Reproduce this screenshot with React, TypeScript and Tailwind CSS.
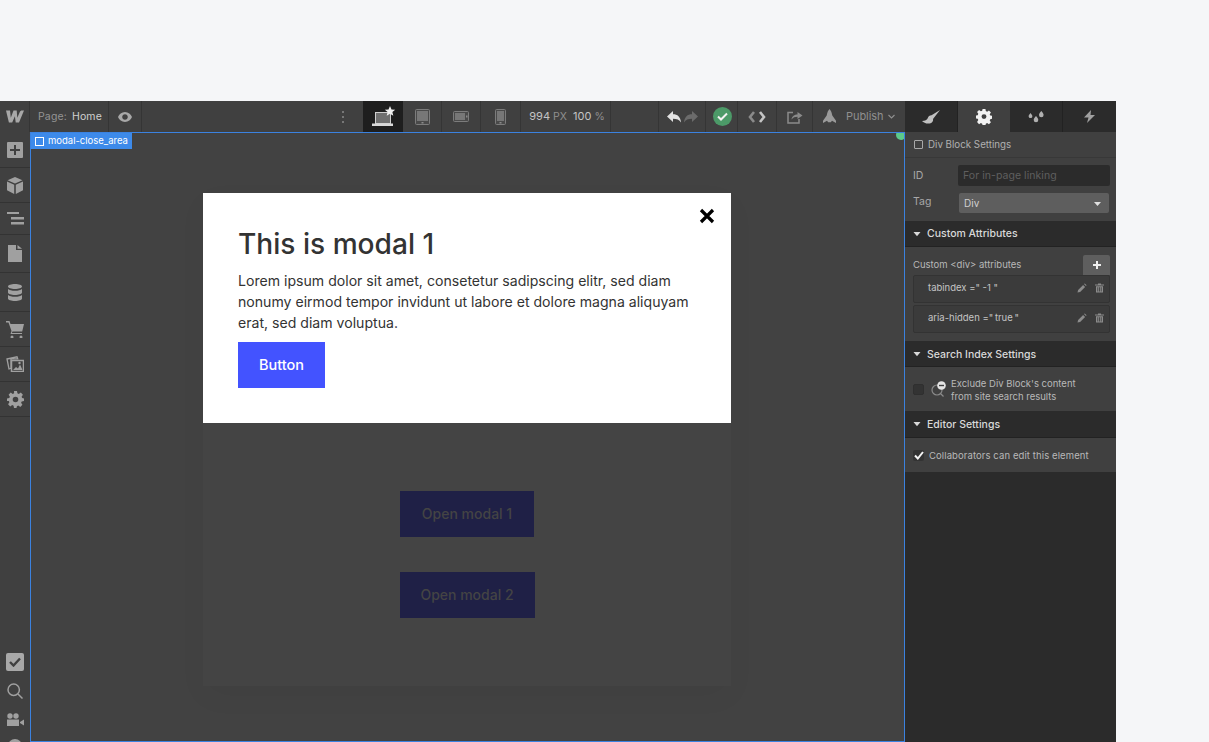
import type { ReactNode } from 'react';

const UI = "font-['Inter',sans-serif]";

const Ico = ({ w = 16, h = 16, vb, children }: { w?: number; h?: number; vb?: string; children: ReactNode }) => (
  <svg width={w} height={h} viewBox={vb ?? `0 0 ${w} ${h}`} fill="currentColor" className="block shrink-0">
    {children}
  </svg>
);

const SideItem = ({ h, children }: { h: string; children: ReactNode }) => (
  <div className={`${h} flex items-center justify-center border-b border-[#333] text-[#a0a0a0]`}>{children}</div>
);

const SectionHeader = ({ title, h, low }: { title: string; h: string; low?: boolean }) => (
  <div className={`${h} flex items-center gap-[6px] bg-[#2b2b2b] border-b border-[#222] pl-[8px] shrink-0`}>
    <Ico w={8} h={6}><path d="M0.5 1h7L4 5.2z" fill="#d9d9d9" /></Ico>
    <span className={`text-[10.5px] font-medium text-[#d9d9d9] ${low ? 'pt-[2px]' : 'pt-[1px]'}`}>{title}</span>
  </div>
);

const AttrRow = ({ label, h }: { label: string; h: string }) => (
  <div className={`${h} flex items-center justify-between bg-[#3b3b3b] border border-[#333] rounded-[2px] pl-[14px] pr-[5px]`}>
    <span className="text-[9.5px] text-[#c4c4c4] pb-[1px]">{label}</span>
    <div className="flex items-center gap-[8px] text-[#8c8c8c] -mt-[3px]">
      <Ico w={10} h={10}><path d="M0.5 9.5l.6-2.600 5-5 2 2-5 5zM7 1l.8-.6 1.800 1.800-.7.8z" /></Ico>
      <Ico w={9} h={10}><path d="M3 .5h3v1h3v1H0v-1h3zM1 3.200h7V9.500H1zM2.400 4.200v4.300h.8V4.200zm1.700 0v4.300h.8V4.200zm1.700 0v4.300h.8V4.200z" fillRule="evenodd" /></Ico>
    </div>
  </div>
);

const TopSep = ({ className, children }: { className: string; children?: ReactNode }) => (
  <div className={`${className} h-full flex items-center justify-center border-r border-[#353535] shrink-0`}>{children}</div>
);

const TabletIcon = ({ w, h }: { w: number; h: number }) => (
  <svg width={w} height={h} viewBox={`0 0 ${w} ${h}`} className="block">
    <rect x="0.5" y="0.5" width={w - 1} height={h - 1} rx="1" fill="#4a4a4a" stroke="#7c7c7c" />
    <rect x="2" y="2" width={w - 4} height={h - 6} fill="#777" />
    <rect x={w / 2 - 1} y={h - 3} width="2" height="1.500" fill="#8a8a8a" />
  </svg>
);

const LandscapeIcon = () => (
  <svg width="16" height="11" viewBox="0 0 16 11" className="block">
    <rect x="0.5" y="0.5" width="15" height="10" rx="1" fill="#4a4a4a" stroke="#7c7c7c" />
    <rect x="2" y="2" width="10" height="7" fill="#777" />
    <rect x="13" y="4.500" width="1.500" height="2" fill="#8a8a8a" />
  </svg>
);

export default function App() {
  return (
    <div className={`${UI} w-[1209px] h-[742px] bg-[#f5f6f8] pt-[101px] overflow-hidden`}>
      <div className="w-[1116px] h-[641px] flex overflow-hidden">
        <div className="w-[905px] flex flex-col shrink-0">
          {/* Top bar */}
          <div className="h-[31px] flex bg-[#404040] shrink-0 text-[#a8a8a8]">
            <TopSep className="w-[30px]">
              <svg width="18" height="13" viewBox="0 0 18 13" className="block">
                <path d="M0 .5h4l.8 7.300L7.500.5h3.200l.6 7.300L13.800 2c.5-1 1.200-1.500 2.200-1.500h2L13 12.500H9.700l-.8-6.200-2.700 6.200H2.900z" fill="#a8a8a8" />
              </svg>
            </TopSep>
            <TopSep className="w-[79px]">
              <span className="text-[10.5px] whitespace-nowrap pl-[2px] tracking-[0.15px]">
                <span className="text-[#949494]">Page:</span>
                <span className="text-[#d0d0d0] ml-[5px]">Home</span>
              </span>
            </TopSep>
            <TopSep className="w-[33px]">
              <Ico w={14} h={10}>
                <path d="M7 0C3.600 0 1.200 2.400 0 5c1.200 2.600 3.600 5 7 5s5.800-2.400 7-5c-1.200-2.600-3.600-5-7-5zm0 2.200c1.600 0 2.800 1.200 2.800 2.800S8.600 7.800 7 7.800 4.200 6.600 4.200 5 5.400 2.200 7 2.200z" fillRule="evenodd" />
              </Ico>
            </TopSep>
            <div className="w-[221px] h-[31px] flex items-center justify-end pr-[19px] shrink-0">
              <div className="flex flex-col gap-[3px]">
                <span className="w-[2px] h-[2px] bg-[#777]" />
                <span className="w-[2px] h-[2px] bg-[#777]" />
                <span className="w-[2px] h-[2px] bg-[#777]" />
              </div>
            </div>
            <div className="w-[40px] h-full bg-[#1e1e1e] flex items-center justify-center shrink-0">
              <svg width="24" height="20" viewBox="0 0 24 20" className="block -mt-[2px] ml-[1px]">
                <rect x="3.500" y="6.500" width="15" height="11" fill="#6f6f6f" stroke="#cfcfcf" />
                <rect x="0" y="17.500" width="21" height="2.500" fill="#d8d8d8" />
                <path d="M18 0l1.500 3.400 3.700.3-2.800 2.400.9 3.600L18 7.800l-3.300 1.900.9-3.600-2.800-2.400 3.700-.3z" fill="#f0f0f0" />
              </svg>
            </div>
            <TopSep className="w-[39px]"><TabletIcon w={15} h={16} /></TopSep>
            <TopSep className="w-[39px]"><LandscapeIcon /></TopSep>
            <TopSep className="w-[40px]"><TabletIcon w={11} h={16} /></TopSep>
            <TopSep className="w-[90px]">
              <span className="text-[11px] whitespace-nowrap text-[#c4c4c4] pl-[3px]">
                994 <span className="text-[#8f8f8f] text-[10.5px]">PX</span>
                <span className="ml-[6px]">100</span> <span className="text-[#8f8f8f] text-[10.5px]">%</span>
              </span>
            </TopSep>
            <div className="w-[48px] h-full border-r border-[#353535] shrink-0" />
            <TopSep className="w-[47px]">
              <div className="flex items-center gap-[3px]">
                <Ico w={14} h={12}><path d="M6 0v3.200c4.500 0 7.500 2.500 8 8.300-1.600-2.900-4.300-3.700-8-3.700V11L0 5.500z" fill="#e2e2e2" /></Ico>
                <Ico w={14} h={12}><path d="M8 0v3.200C3.500 3.200.5 5.700 0 11.500c1.600-2.900 4.300-3.700 8-3.700V11l6-5.500z" fill="#6b6b6b" /></Ico>
              </div>
            </TopSep>
            <TopSep className="w-[32px]">
              <div className="w-[19px] h-[19px] ml-[1px] rounded-full bg-[#4c9a68] flex items-center justify-center">
                <Ico w={11} h={9}><path d="M1 4.500l3 3 6-6" fill="none" stroke="#f2f2f2" strokeWidth="2" /></Ico>
              </div>
            </TopSep>
            <TopSep className="w-[39px]">
              <svg width="18" height="12" viewBox="0 0 18 12" className="block" fill="none" strokeWidth="2.600">
                <path d="M6 1L2 6l4 5" stroke="#8a8a8a" />
                <path d="M12 1l4 5-4 5" stroke="#c4c4c4" />
              </svg>
            </TopSep>
            <TopSep className="w-[36px]">
              <svg width="16" height="14" viewBox="0 0 16 14" className="block" fill="none">
                <path d="M6 2.500H1v10.500h11V9" stroke="#8a8a8a" strokeWidth="1.500" />
                <path d="M4.500 9.500C5 6 7.500 4.500 10.500 4.500V2L15.500 5.500 10.500 9V6.800C8 6.800 6 7.500 4.500 9.500z" fill="#8a8a8a" />
              </svg>
            </TopSep>
            <div className="flex-1 flex items-center pl-[9px] gap-[9px]">
              <Ico w={15} h={15}>
                <path d="M7.500 0c1.300 1.300 2.300 3.500 2.800 6.500l3.700 5.300V14l-4-2.200-1.200 1.400H6.200L5 11.800 1 14v-2.200l3.700-5.300C5.200 3.500 6.200 1.300 7.500 0z" fill="#9a9a9a" />
              </Ico>
              <span className="text-[11px] text-[#8f8f8f] tracking-[-0.05px]">Publish</span>
              <div className="-ml-[5px]">
                <Ico w={7} h={5}><path d="M.5 1l3 3 3-3" fill="none" stroke="#8f8f8f" strokeWidth="1.100" /></Ico>
              </div>
            </div>
          </div>

          <div className="flex-1 flex min-h-0">
            {/* Left toolbar */}
            <div className="w-[30px] bg-[#404040] flex flex-col justify-between shrink-0 overflow-hidden">
              <div>
                <SideItem h="h-[36px]">
                  <div className="w-[16px] h-[16px] bg-[#a0a0a0] rounded-[1px] flex items-center justify-center">
                    <Ico w={10} h={10}><path d="M4 0h2v4h4v2H6v4H4V6H0V4h4z" fill="#404040" /></Ico>
                  </div>
                </SideItem>
                <SideItem h="h-[35px]">
                  <Ico w={16} h={17}>
                    <path d="M8 0l7.500 3.200L8 6.500.5 3.200zM0 4.500l7.200 3.200V17L0 13.300zM16 4.500L8.800 7.700V17l7.200-3.700z" />
                  </Ico>
                </SideItem>
                <SideItem h="h-[32px]">
                  <Ico w={17} h={13}><path d="M0 0h12v2H0zM4 5h13v2.500H4zM4 10h13v2.500H4z" /></Ico>
                </SideItem>
                <SideItem h="h-[38px]">
                  <Ico w={14} h={17}><path d="M0 0h8v5h6v12H0zM9.500 0L14 3.800H9.500z" /></Ico>
                </SideItem>
                <SideItem h="h-[39px]">
                  <Ico w={14} h={17}>
                    <path d="M7 0c3.900 0 7 1 7 2.500S10.900 5 7 5 0 4 0 2.500 3.100 0 7 0zM0 5c1.200 1.200 3.800 1.800 7 1.800S12.800 6.200 14 5v3.500C14 10 10.900 11 7 11S0 10 0 8.500zM0 11c1.200 1.200 3.800 1.800 7 1.800s5.800-.6 7-1.800v3.500C14 16 10.900 17 7 17s-7-1-7-2.500z" />
                  </Ico>
                </SideItem>
                <SideItem h="h-[35px]">
                  <Ico w={18} h={17}>
                    <path d="M0 0h3.500l1 3H18l-1.800 7.500H6.500L5.800 12H16v1H4.500l1-3L2.500 1.500H0z" />
                    <circle cx="6" cy="16" r="1.500" /><circle cx="15" cy="16" r="1.500" />
                  </Ico>
                </SideItem>
                <SideItem h="h-[35px]">
                  <svg width="18" height="16" viewBox="0 0 18 16" className="block">
                    <path d="M1 3L11 .8l.7 2H5v9.500L3 13z" fill="none" stroke="#a0a0a0" strokeWidth="1.300" />
                    <rect x="5.500" y="4.500" width="12" height="11" fill="none" stroke="#a0a0a0" strokeWidth="1.500" />
                    <path d="M7 14l3-3 2 1.500 2-4 2.500 5.500z" fill="#a0a0a0" />
                    <circle cx="13.500" cy="7" r="1.200" fill="#a0a0a0" />
                  </svg>
                </SideItem>
                <SideItem h="h-[35px]">
                  <Ico w={17} h={17}>
                    <path d="M7 0h3l.4 2.300 1.400.6 2-1.300 2.100 2.100-1.300 2 .6 1.400L17 7.500v2.500l-2.300.4-.6 1.400 1.300 2-2.100 2.100-2-1.300-1.400.6L9.500 17H7l-.4-2.300-1.400-.6-2 1.300-2.100-2.100 1.300-2-.6-1.400L0 10V7.500l2.300-.4.6-1.400-1.300-2 2.100-2.100 2 1.300 1.400-.6zM8.500 5.700a2.800 2.800 0 100 5.600 2.800 2.800 0 000-5.600z" fillRule="evenodd" />
                  </Ico>
                </SideItem>
              </div>
              <div className="flex flex-col items-center text-[#a0a0a0] h-[89px] shrink-0">
                <div className="w-[18px] h-[18px] bg-[#a8a8a8] rounded-[2px] flex items-center justify-center shrink-0">
                  <Ico w={12} h={10}><path d="M1 5l3.500 3.500L11 1.500" fill="none" stroke="#404040" strokeWidth="2.400" /></Ico>
                </div>
                <svg width="16" height="16" viewBox="0 0 16 16" className="block mt-[12px] shrink-0" fill="none" stroke="#a0a0a0" strokeWidth="1.500">
                  <circle cx="6.700" cy="6.700" r="5.700" /><path d="M11 11l4.500 4.500" />
                </svg>
                <div className="mt-[14px] shrink-0">
                  <Ico w={18} h={14}>
                    <circle cx="4" cy="3" r="2.700" /><circle cx="10" cy="3" r="2.700" />
                    <path d="M1 6.500h12V13H1zM14 9l4-2.500v6L14 10z" />
                  </Ico>
                </div>
                <span className="mt-[12px] w-[14px] h-[14px] rounded-full bg-[#a0a0a0] shrink-0" />
              </div>
            </div>

            {/* Canvas */}
            <div className="flex-1 bg-[#424242] border border-[#3b82e0] relative overflow-hidden pl-[172px] pt-[60px]">
              <div className="absolute left-0 top-0 h-[16px] w-[101px] bg-[#3d8aea] flex items-center pl-[4px] gap-[4px] text-white">
                <span className="w-[9px] h-[9px] border border-white shrink-0" />
                <span className="text-[9.5px] whitespace-nowrap">modal-close_area</span>
              </div>
              <div className="absolute -right-[2px] -top-[3px] w-[10px] h-[10px] rounded-full bg-[#5cc98a]" />

              <div className="w-[528px] h-[493px] bg-[#444444] shadow-[0_10px_30px_rgba(0,0,0,0.03)] flex flex-col items-center">
                <div className="w-full h-[230px] bg-white relative pt-[34px] px-[35px] shrink-0">
                  <svg width="16" height="16" viewBox="0 0 16 16" className="absolute right-[16px] top-[15px]">
                    <path d="M2 2l12 12M14 2L2 14" stroke="#000" strokeWidth="3.200" />
                  </svg>
                  <h2 className="text-[28.1px] leading-[34px] font-medium text-[#333]">This is modal 1</h2>
                  <p className="text-[14.1px] leading-[21px] text-[#333] mt-[9px]">
                    Lorem ipsum dolor sit amet, consetetur sadipscing elitr, sed diam nonumy eirmod tempor invidunt ut labore et dolore magna aliquyam erat, sed diam voluptua.
                  </p>
                  <div className="mt-[9px] w-[87px] h-[46px] bg-[#4353ff] text-white text-[14.5px] font-medium flex items-center justify-center">Button</div>
                </div>
                <div className="mt-[68px] w-[134px] h-[46px] pb-[1px] bg-[#1f2046] text-[#444] text-[14px] font-medium flex items-center justify-center">Open modal 1</div>
                <div className="mt-[35px] w-[135px] h-[46px] pb-[1px] bg-[#1f2046] text-[#444] text-[14px] font-medium flex items-center justify-center">Open modal 2</div>
              </div>
            </div>
          </div>
        </div>

        {/* Right panel */}
        <div className="w-[211px] bg-[#2b2b2b] flex flex-col shrink-0">
          <div className="h-[31px] flex shrink-0 text-[#b8b8b8]">
            <div className="w-[53px] flex items-center justify-center border-r border-[#222]">
              <Ico w={18} h={14}>
                <path d="M18 0L9.500 5.200C7.500 5.200 6.300 6.400 5.700 8.300 5.200 10 3 10.800 0 11c2 2.200 6 3.500 9.200 1.900 1.600-.8 2.200-2.500 1.800-4z" fill="#c0c0c0" />
              </Ico>
            </div>
            <div className="w-[52px] bg-[#404040] flex items-center justify-center">
              <Ico w={16} h={16}>
                <path d="M6.500 0h3l.4 2.200 1.400.6 1.900-1.300 2.100 2.100-1.300 1.900.6 1.400 2.200.4v3l-2.200.4-.6 1.400 1.300 1.900-2.100 2.100-1.900-1.300-1.400.6-.4 2.200h-3l-.4-2.200-1.400-.6-1.900 1.300L.7 13.600 2 11.700l-.6-1.400L-.8 9.900v-3l2.200-.4.6-1.400L.7 3.200l2.100-2.100 1.900 1.300 1.400-.6zM8 5.400a2.600 2.600 0 100 5.200 2.600 2.600 0 000-5.200z" fill="#f2f2f2" fillRule="evenodd" transform="translate(0.4 0) scale(0.95)" />
              </Ico>
            </div>
            <div className="w-[53px] flex items-center justify-center border-r border-[#222]">
              <Ico w={16} h={12}>
                <path d="M2.500 2c1 1.300 1.900 2.200 1.900 3.200a1.900 1.900 0 01-3.800 0c0-1 .9-1.900 1.900-3.200zM8 5c1.200 1.600 2.300 2.500 2.300 4a2.300 2.300 0 01-4.600 0c0-1.500 1.100-2.400 2.300-4zM13.300 0c1.200 1.600 2.300 2.500 2.300 4a2.300 2.300 0 01-4.600 0c0-1.500 1.100-2.400 2.300-4z" fill="#b0b0b0" />
              </Ico>
            </div>
            <div className="w-[53px] flex items-center justify-center">
              <Ico w={11} h={13}><path d="M7 0L0 7.500h4.500L3 13l8-8H6.500z" fill="#a0a0a0" /></Ico>
            </div>
          </div>

          <div className="bg-[#404040] shrink-0">
            <div className="h-[26px] flex items-center pl-[9px] gap-[5px] border-b border-[#383838]">
              <span className="w-[9px] h-[9px] border border-[#a8a8a8] rounded-[1px]" />
              <span className="text-[9.75px] text-[#b0b0b0] pt-[1px]">Div Block Settings</span>
            </div>
            <div className="h-[63px] pl-[8px] pr-[6px] pt-[7px] flex flex-col gap-[7px]">
              <div className="flex items-center h-[21px]">
                <span className="w-[45px] text-[10.5px] text-[#a8a8a8]">ID</span>
                <div className="flex-1 h-[21px] bg-[#2b2b2b] rounded-[2px] flex items-center pl-[5px] text-[10.5px] text-[#5f5f5f] tracking-[0.05px]">For in-page linking</div>
              </div>
              <div className="flex items-center h-[20px]">
                <span className="w-[46px] text-[10.5px] text-[#a8a8a8] -mt-[2px]">Tag</span>
                <div className="flex-1 h-[20px] mr-[1px] bg-[#5e5e5e] rounded-[2px] flex items-center justify-between pl-[5px] pr-[8px] pt-[1px] text-[10px] text-[#d0d0d0]">
                  Div
                  <Ico w={7} h={4}><path d="M0 0h7L3.500 4z" fill="#e0e0e0" /></Ico>
                </div>
              </div>
            </div>
          </div>

          <SectionHeader title="Custom Attributes" h="h-[26px]" />
          <div className="h-[94px] bg-[#404040] pl-[8px] pr-[6px] pt-[8px] shrink-0">
            <div className="flex items-center justify-between h-[20px]">
              <span className="text-[9.5px] text-[#b8b8b8]">Custom &lt;div&gt; attributes</span>
              <div className="w-[27px] h-[20px] bg-[#5e5e5e] rounded-t-[2px] flex items-center justify-center">
                <Ico w={8} h={8}><path d="M3 0h2v3h3v2H5v3H3V5H0V3h3z" fill="#eee" /></Ico>
              </div>
            </div>
            <div className="flex flex-col gap-[2px]">
              <AttrRow label={'tabindex =" -1 "'} h="h-[28px]" />
              <AttrRow label={'aria-hidden ="\u2009true\u2009"'} h="h-[28px]" />
            </div>
          </div>

          <SectionHeader title="Search Index Settings" h="h-[26px]" low />
          <div className="h-[44px] bg-[#404040] flex items-center pl-[8px] shrink-0">
            <span className="w-[11px] h-[11px] bg-[#333] border border-[#2f2f2f] rounded-[2px] shrink-0" />
            <svg width="16" height="16" viewBox="0 0 16 16" className="block ml-[7px] shrink-0">
              <circle cx="6" cy="9" r="5" fill="none" stroke="#8a8a8a" strokeWidth="1.200" />
              <path d="M9.500 12.500l3 3" stroke="#8a8a8a" strokeWidth="1.200" />
              <circle cx="10.500" cy="4.500" r="4.300" fill="#e4e4e4" />
              <rect x="8" y="3.800" width="5" height="1.400" fill="#404040" />
            </svg>
            <span className="ml-[4px] mt-[3px] text-[9.5px] leading-[12.5px] text-[#b8b8b8]">Exclude Div Block's content<br />from site search results</span>
          </div>

          <SectionHeader title="Editor Settings" h="h-[27px]" low />
          <div className="h-[34px] bg-[#404040] flex items-center pl-[8px] shrink-0">
            <span className="w-[11px] h-[11px] bg-[#333] rounded-[2px] flex items-center justify-center shrink-0">
              <Ico w={10} h={9}><path d="M1 4.500l2.800 3L9 1" fill="none" stroke="#f4f4f4" strokeWidth="2" /></Ico>
            </span>
            <span className="ml-[5px] mt-[2px] text-[9.5px] text-[#b8b8b8] tracking-[0.1px] whitespace-nowrap">Collaborators can edit this element</span>
          </div>
        </div>
      </div>
    </div>
  );
}
